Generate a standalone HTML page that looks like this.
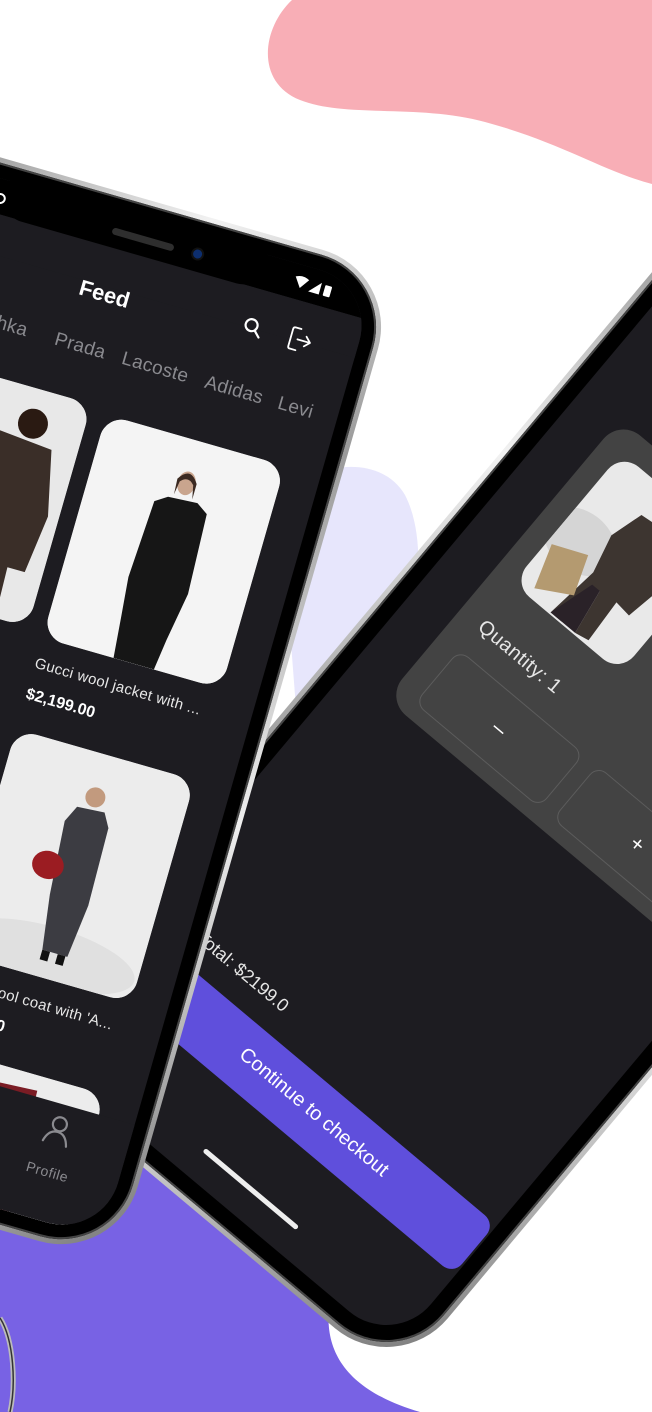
<!DOCTYPE html>
<html><head><meta charset="utf-8">
<style>
*{margin:0;padding:0;box-sizing:border-box}
html,body{width:652px;height:1412px;overflow:hidden;background:#fff;font-family:"Liberation Sans",sans-serif;position:relative}
#bg{position:absolute;left:0;top:0}
.phone{position:absolute}
.frame{position:absolute;inset:0;border-radius:80px;background:linear-gradient(135deg,#888 0%,#f2f2f2 20%,#9a9a9a 45%,#eee 70%,#777 100%)}
.body{position:absolute;inset:5px;border-radius:75px;background:#000;box-shadow:inset 0 0 0 2px #444}
.screen{position:absolute;inset:20px;border-radius:58px;background:#1d1c21;overflow:hidden}
.abs{position:absolute}
.tab{position:absolute;top:160px;transform:translate(-50%,-50%);font-size:19px;color:#8a8a8f;white-space:nowrap;letter-spacing:.3px}
.card{position:absolute;width:186px;height:232px;border-radius:22px;background:#efefef;overflow:hidden}
.ttl{position:absolute;color:#e8e8e8;font-size:15px;white-space:nowrap;letter-spacing:.3px}
.prc{position:absolute;color:#fff;font-size:16px;font-weight:bold;white-space:nowrap}
</style></head><body>
<svg id="bg" width="652" height="1412" viewBox="0 0 652 1412">
<path d="M292,0 C262,28 255,82 300,100 C345,118 420,104 485,122 C560,142 605,172 652,184 L652,0 Z" fill="#f8aeb6"/>
<path d="M280,500 C310,462 380,452 405,495 C422,528 420,575 414,610 L300,760 Z" fill="#e7e6fc"/>
<path d="M0,1100 L330,1100 L330,1300 C322,1350 345,1390 420,1412 L0,1412 Z" fill="#7862e4"/>
<path d="M0,1318 C14,1340 16,1385 10,1412" stroke="#bbb" stroke-width="5" fill="none"/>
<path d="M0,1318 C14,1340 16,1385 10,1412" stroke="#333" stroke-width="1.5" fill="none"/>
</svg>

<!-- right phone -->
<div class="phone" style="left:1px;top:-52px;width:516px;height:1100px;transform-origin:0 100%;transform:rotate(40deg)">
 <div class="frame"></div><div class="body"></div>
 <div class="screen" style="inset:22px"></div>
 <div class="abs" style="left:70px;top:220px;width:376px;height:365px;border-radius:26px;background:#434343"></div>
 <div class="abs" style="left:93px;top:245px;width:140px;height:170px;border-radius:22px;background:#e9e9e9;overflow:hidden">
  <svg width="140" height="170" viewBox="0 0 140 170">
   <ellipse cx="25" cy="95" rx="40" ry="30" fill="#d5d5d5"/>
   <path d="M55,35 L100,30 L118,75 L110,120 L92,118 L95,165 L80,168 L72,120 L62,168 L48,168 L55,110 L45,70 Z" fill="#3d3530"/>
   <path d="M62,120 L72,120 L80,168 L48,168 Z" fill="#2a2228"/>
   <circle cx="80" cy="20" r="11" fill="#2b1c16"/>
   <path d="M5,115 L40,100 L55,140 L20,160 Z" fill="#b49a70"/>
  </svg>
 </div>
 <div class="abs" style="left:95px;top:456px;color:#e6e6e6;font-size:20px;letter-spacing:.5px">Quantity: 1</div>
 <div class="abs" style="left:95px;top:500px;width:163px;height:70px;border:1px solid #5c5c5c;border-radius:12px;color:#fff;font-size:22px;text-align:center;line-height:68px">–</div>
 <div class="abs" style="left:275px;top:500px;width:163px;height:70px;border:1px solid #5c5c5c;border-radius:12px;color:#fff;font-size:22px;text-align:center;line-height:68px">+</div>
 <div class="abs" style="left:0;top:876px;width:193px;text-align:right;color:#e6e6e6;font-size:18px">Total: $2199.0</div>
 <div class="abs" style="left:70px;top:917px;width:422px;height:66px;border-radius:14px;background:#5f4fdc"></div>
 <div class="abs" style="left:181px;top:937px;width:200px;text-align:center;color:#fff;font-size:20px;white-space:nowrap">Continue to checkout</div>
 <div class="abs" style="left:221px;top:1045px;width:122px;height:5px;border-radius:3px;background:#eee"></div>
</div>

<!-- left phone -->
<div class="phone" style="left:-100px;top:272px;width:500px;height:1031px;transform-origin:100% 0;transform:rotate(16deg)">
 <div class="frame"></div><div class="body"></div>
 <div class="screen">
  <div class="abs" style="left:-20px;top:-20px;width:500px;height:1031px">
   <div class="abs" style="left:0;top:0;width:500px;height:55px;background:#000"></div>
   <div class="abs" style="left:0;top:55px;width:500px;height:40px;background:#1d1c21;border-radius:0"></div>
   <!-- row 1 -->
   <div class="card" style="left:54px;top:212px">
    <svg width="186" height="232" viewBox="0 0 186 232"><rect width="186" height="232" fill="#e8e8e8"/><path d="M100,50 L160,55 L175,120 L168,180 L150,180 L152,232 L110,232 L112,180 L95,120 Z" fill="#3a2e28"/><circle cx="135" cy="35" r="15" fill="#2a1a12"/></svg>
   </div>
   <div class="ttl" style="left:54px;top:468px">Gucci wool shirt wi...</div>
   <div class="prc" style="left:54px;top:500px">$1,590.00</div>
   <div class="card" style="left:257px;top:218px">
    <svg width="186" height="232" viewBox="0 0 186 232"><rect width="186" height="232" fill="#f4f4f4"/><path d="M82,62 L112,60 L124,68 L128,150 L120,200 L116,232 L74,232 L70,190 L66,150 L70,70 Z" fill="#161616"/><ellipse cx="96" cy="44" rx="9" ry="12" fill="#c9a58e"/><path d="M86,42 Q96,26 106,42 L106,58 L103,44 Q96,36 89,44 L87,58 Z" fill="#3b2a22"/></svg>
   </div>
   <div class="ttl" style="left:257px;top:468px">Gucci wool jacket with ...</div>
   <div class="prc" style="left:257px;top:500px">$2,199.00</div>
   <!-- row 2 -->
   <div class="card" style="left:54px;top:540px"></div>
   <div class="card" style="left:257px;top:545px">
    <svg width="186" height="232" viewBox="0 0 186 232"><rect width="186" height="232" fill="#ececec"/><ellipse cx="93" cy="210" rx="90" ry="30" fill="#e0e0e0"/><path d="M80,58 L108,56 L116,70 L118,150 L112,205 L86,205 L78,150 L72,75 Z" fill="#3c3c42"/><ellipse cx="68" cy="122" rx="16" ry="14" fill="#9b1c22"/><circle cx="95" cy="44" r="10" fill="#c29a7e"/><rect x="86" y="205" width="8" height="10" fill="#111"/><rect x="102" y="205" width="8" height="10" fill="#111"/></svg>
   </div>
   <div class="ttl" style="left:257px;top:795px">Gucci wool coat with 'A...</div>
   <div class="prc" style="left:257px;top:827px">$3,100.00</div>
   <!-- row 3 -->
   <div class="card" style="left:54px;top:868px"></div>
   <div class="card" style="left:257px;top:872px">
    <svg width="186" height="232" viewBox="0 0 186 232"><rect width="186" height="232" fill="#ececec"/><path d="M40,20 L120,15 L130,232 L30,232 Z" fill="#7a1c24"/></svg>
   </div>
   <!-- nav -->
   <div class="abs" style="left:0;top:893px;width:500px;height:140px;background:#1d1c21"></div>
  </div>
 </div>
 <!-- notch -->
 <div class="abs" style="left:100px;top:18px;width:268px;height:38px;background:#000;border-radius:0 0 22px 22px"></div>
 <div class="abs" style="left:212px;top:36px;width:64px;height:7px;border-radius:4px;background:#2e2e2e"></div>
 <div class="abs" style="left:296px;top:34px;width:9px;height:9px;border-radius:50%;background:#0d2e6e;box-shadow:0 0 0 2px #111"></div>
 <div class="abs" style="left:90px;top:34px;width:11px;height:11px;border-radius:50%;border:2px solid #fff"></div>
 <svg class="abs" style="left:400px;top:30px" width="44" height="16" viewBox="0 0 44 16">
  <path d="M1,3 Q8,-1 15,3 L8,13 Z" fill="#fff"/><path d="M28,2 L28,14 L17,14 Z" fill="#fff"/><rect x="32" y="3" width="7" height="11" rx="1" fill="#fff"/>
 </svg>
 <div class="abs" style="left:222px;top:103px;transform:translate(-50%,-50%);color:#fff;font-size:22px;font-weight:bold">Feed</div>
 <svg class="abs" style="left:362px;top:82px" width="24" height="24" viewBox="0 0 24 24" fill="none" stroke="#fff" stroke-width="2.2" stroke-linecap="round"><circle cx="10" cy="10" r="6"/><path d="M14.5,14.5 L20,20"/></svg>
 <svg class="abs" style="left:409px;top:79px" width="28" height="28" viewBox="0 0 28 28" fill="none" stroke="#fff" stroke-width="1.8" stroke-linecap="round" stroke-linejoin="round"><path d="M12,3 H6 Q4,3 4,5 V23 Q4,25 6,25 H12"/><path d="M11,14 H24 M19,9 L24,14 L19,19"/></svg>
 <div class="tab" style="left:122px">Bershka</div>
 <div class="tab" style="left:213px">Prada</div>
 <div class="tab" style="left:291px">Lacoste</div>
 <div class="tab" style="left:373px">Adidas</div>
 <div class="tab" style="left:437px">Levi</div>
 <svg class="abs" style="left:393px;top:903px" width="30" height="32" viewBox="0 0 30 32" fill="none" stroke="#8a8a8f" stroke-width="2.2" stroke-linecap="round"><circle cx="15" cy="10" r="7"/><path d="M3,30 Q6,18 15,18 Q24,18 27,30"/></svg>
 <div class="abs" style="left:409px;top:962px;transform:translate(-50%,-50%);color:#8a8a8f;font-size:14px;letter-spacing:.5px">Profile</div>
</div>
</body></html>
